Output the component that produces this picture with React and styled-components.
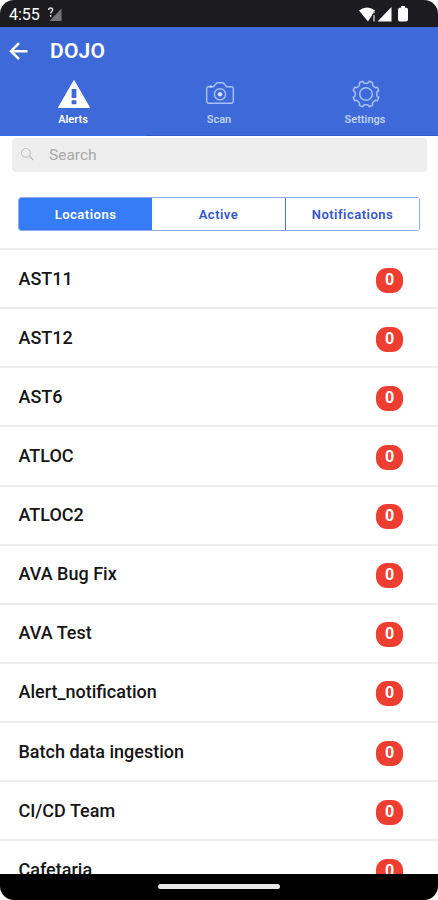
import React from "react";
import styled, { createGlobalStyle } from "styled-components";

const GlobalStyle = createGlobalStyle`
  * {
    margin: 0;
    padding: 0;
    box-sizing: border-box;
  }

  body {
    background: #fff;
    font-family: Roboto, sans-serif;
  }
`;

const Screen = styled.div`
  width: 438px;
  height: 900px;
  display: flex;
  flex-direction: column;
  overflow: hidden;
  background: #fff;
  border-radius: 14px;
`;

const StatusBar = styled.div`
  flex: 0 0 27px;
  display: flex;
  align-items: center;
  justify-content: space-between;
  padding: 1px 30px 0 9px;
  background: #1c1c20;
  color: #fff;
`;

const StatusGroup = styled.div`
  display: flex;
  align-items: center;
`;

const Clock = styled.span`
  width: 38px;
  font-size: 16px;
  line-height: 24px;
  padding-top: 1px;
`;

const Header = styled.header`
  flex: 0 0 109px;
  background: #3d6ad8;
  color: #fff;
`;

const TitleBar = styled.div`
  height: 48px;
  display: flex;
  align-items: center;
  padding-left: 8px;
`;

const BackButton = styled.button`
  width: 42px;
  height: 22px;
  border: none;
  background: none;
  text-align: left;

  & svg {
    display: block;
  }
`;

const Title = styled.h1`
  font-size: 21px;
  font-weight: 600;
  line-height: 24px;
  letter-spacing: 0.2px;
`;

const Tabs = styled.nav`
  display: grid;
  grid-template-columns: repeat(3, 146px);
  height: 61px;
`;

const Tab = styled.button`
  display: flex;
  flex-direction: column;
  align-items: center;
  padding-top: 3px;
  border: none;
  border-bottom: 1px solid ${(props) => (props.$active ? "#2b70ea" : "#2d5bcb")};
  background: none;
  font-family: inherit;
  font-size: 11px;
  font-weight: 600;
  line-height: 14px;
  color: ${(props) => (props.$active ? "#fff" : "#bfd0f8")};

  & svg {
    display: block;
    margin: 0 0 3px 1px;
  }
`;

const Search = styled.label`
  flex: 0 0 34px;
  display: flex;
  align-items: center;
  margin: 2px 11px 0 12px;
  padding-left: 8px;
  background: #eee;
  border-radius: 4px;

  & svg {
    flex: none;
    margin: 0 15px 2px 0;
  }

  & input {
    border: none;
    outline: none;
    background: none;
    font-family: inherit;
    font-size: 15.5px;
    width: 300px;
  }

  & input::placeholder {
    color: #a8a8a8;
  }
`;

const Segments = styled.div`
  flex: 0 0 34px;
  display: flex;
  margin: 25px 18px 17px;
  border: 1px solid #91abec;
  border-radius: 3px;
  overflow: hidden;
`;

const Segment = styled.button`
  flex: 1;
  padding-top: 1px;
  border: none;
  border-left: ${(props) => (props.$divided ? "1px solid #4474e0" : "none")};
  background: ${(props) => (props.$active ? "#367cf6" : "#fff")};
  color: ${(props) => (props.$active ? "#fff" : "#3355ce")};
  font-family: inherit;
  font-size: 13px;
  font-weight: 600;
  letter-spacing: 0.5px;
`;

const List = styled.ul`
  flex: 1;
  min-height: 0;
  overflow: hidden;
  list-style: none;
`;

const Item = styled.li`
  height: 59.13px;
  display: flex;
  align-items: center;
  justify-content: space-between;
  padding: 0 35px 0 18.5px;
  border-top: 2px solid #ededed;
`;

const Name = styled.p`
  font-size: 18px;
  font-weight: 500;
  line-height: 24px;
  color: #151515;
`;

const Badge = styled.span`
  width: 27px;
  height: 25px;
  margin-top: 3px;
  border-radius: 11px;
  background: #ee3e32;
  color: #fff;
  font-size: 16px;
  font-weight: 700;
  line-height: 24px;
  text-align: center;
`;

const NavigationBar = styled.div`
  flex: 0 0 26px;
  display: flex;
  justify-content: center;
  padding-top: 10px;
  background: #000;
`;

const Handle = styled.div`
  width: 122px;
  height: 5px;
  border-radius: 2.5px;
  background: #e9e9e9;
`;

// Eight teeth, each one a flat top with sloped sides and a rounded valley.
const gearPoints = Array.from({ length: 8 }, (_, i) =>
  [
    [-19, 10.8],
    [-12, 11.2],
    [-8, 13.2],
    [8, 13.2],
    [12, 11.2],
    [19, 10.8],
  ]
    .map(([offset, radius]) => {
      const angle = ((i * 45 + 22.5 + offset) * Math.PI) / 180;
      const x = 14 + radius * Math.cos(angle);
      const y = 14 + radius * Math.sin(angle);
      return `${x.toFixed(2)},${y.toFixed(2)}`;
    })
    .join(" ")
).join(" ");

const NoSignalIcon = () => (
  <svg width="15" height="16" viewBox="0 0 15 16">
    <path d="M14.5 2.5V15h-12z" fill="#77777a" />
    <path
      d="M1.7 4C1.7 1.4 5.6 1.4 5.6 3.8 5.6 5.5 3.7 5.4 3.7 7.5M3.7 9v1.7"
      fill="none"
      stroke="#ddd"
      strokeWidth="1.5"
    />
  </svg>
);

const WifiIcon = () => (
  <svg width="18" height="17" viewBox="0 0 18 17">
    <path d="M0 4.5Q8-1.5 16 4.5L9 15.5z" fill="#fff" />
    <path d="M13 8.5h4v8h-4z" fill="#1c1c20" />
    <path d="M15 5.5v1.7M15 9v6.5" stroke="#aaa" strokeWidth="1.7" />
  </svg>
);

const SignalIcon = () => (
  <svg width="15" height="16" viewBox="0 0 15 16">
    <path d="M14.5 1v14.5H.5z" fill="#fff" />
  </svg>
);

const Battery = styled.svg`
  margin-left: 6px;
`;

const BatteryIcon = () => (
  <Battery width="10" height="16" viewBox="0 0 10 16">
    <path
      d="M3 0h4v1.7h1.3q1.7 0 1.7 1.8v10q0 2-2 2H2q-2 0-2-2v-10Q0 1.7 1.7 1.7H3z"
      fill="#fff"
    />
  </Battery>
);

const BackIcon = () => (
  <svg width="21" height="22" viewBox="0 0 21 22">
    <path
      d="M19.5 11.2H3M11 3.2l-8 8 8 8"
      fill="none"
      stroke="#fff"
      strokeWidth="2.5"
    />
  </svg>
);

const AlertIcon = () => (
  <svg width="34" height="32" viewBox="0 0 34 32">
    <path
      d="M17 2.5L32.5 29.5h-31z"
      fill="#fff"
      stroke="#fff"
      strokeLinejoin="round"
    />
    <path d="M14.6 11h4.8v9h-4.8zM14.6 22.3h4.8v4h-4.8z" fill="#3d6ad8" />
  </svg>
);

const CameraIcon = () => (
  <svg width="30" height="32" viewBox="0 0 30 32">
    <g fill="none" stroke="#a9c0f6" strokeWidth="1.4">
      <path d="M3.3 8.8h5.1l2.7-3.3q.6-.7 1.6-.7h4.6q1 0 1.6.7l2.7 3.3h5.1q1.6 0 1.6 1.6v13.2q0 1.6-1.6 1.6H3.3q-1.6 0-1.6-1.6V10.4q0-1.6 1.6-1.6z" />
      <circle cx="15" cy="16.3" r="5.6" />
    </g>
    <circle cx="15" cy="16.3" r="2.2" fill="#d8e4ff" />
    <circle cx="5.6" cy="8.4" r="1.2" fill="#c7d7fb" />
  </svg>
);

const SettingsIcon = () => (
  <svg width="28" height="32" viewBox="0 -2 28 32">
    <g fill="none" stroke="#a9c0f6" strokeWidth="1.5" strokeLinejoin="round">
      <polygon points={gearPoints} />
      <circle cx="14" cy="14" r="6.3" />
    </g>
  </svg>
);

const SearchIcon = () => (
  <svg width="14" height="14" viewBox="0 0 14 14">
    <g fill="none" stroke="#bcbcbc">
      <circle cx="5.9" cy="5.9" r="4.4" />
      <path d="M9.2 9l4 4" strokeWidth="1.3" />
    </g>
  </svg>
);

const locations = [
  "AST11",
  "AST12",
  "AST6",
  "ATLOC",
  "ATLOC2",
  "AVA Bug Fix",
  "AVA Test",
  "Alert_notification",
  "Batch data ingestion",
  "CI/CD Team",
  "Cafetaria",
];

const App = () => (
  <>
    <GlobalStyle />
    <Screen>
      <StatusBar>
        <StatusGroup>
          <Clock>4:55</Clock>
          <NoSignalIcon />
        </StatusGroup>
        <StatusGroup>
          <WifiIcon />
          <SignalIcon />
          <BatteryIcon />
        </StatusGroup>
      </StatusBar>
      <Header>
        <TitleBar>
          <BackButton aria-label="Back">
            <BackIcon />
          </BackButton>
          <Title>DOJO</Title>
        </TitleBar>
        <Tabs>
          <Tab $active>
            <AlertIcon />
            Alerts
          </Tab>
          <Tab>
            <CameraIcon />
            Scan
          </Tab>
          <Tab>
            <SettingsIcon />
            Settings
          </Tab>
        </Tabs>
      </Header>
      <Search>
        <SearchIcon />
        <input type="text" placeholder="Search" />
      </Search>
      <Segments>
        <Segment $active>Locations</Segment>
        <Segment>Active</Segment>
        <Segment $divided>Notifications</Segment>
      </Segments>
      <List>
        {locations.map((name) => (
          <Item key={name}>
            <Name>{name}</Name>
            <Badge>0</Badge>
          </Item>
        ))}
      </List>
      <NavigationBar>
        <Handle />
      </NavigationBar>
    </Screen>
  </>
);

export default App;
